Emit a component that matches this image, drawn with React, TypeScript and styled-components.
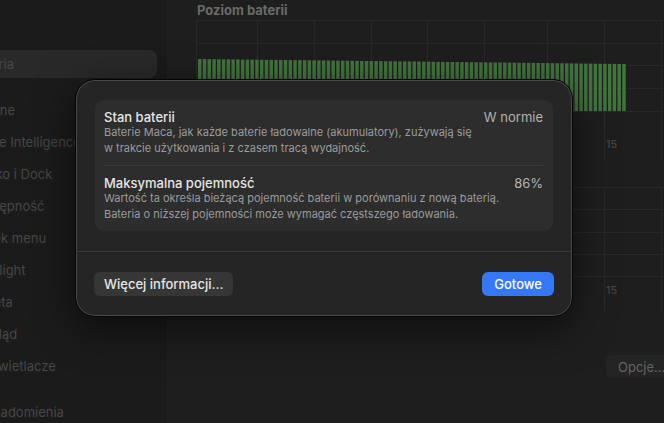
import React from "react";
import styled, { createGlobalStyle } from "styled-components";

const Global = createGlobalStyle`
  html, body { margin: 0; padding: 0; background: #1d1d1d; }
  body { width: 664px; height: 423px; overflow: hidden; font-family: "Inter", "Noto Sans", sans-serif; -webkit-font-smoothing: antialiased; }
  #root { width: 664px; height: 423px; }
`;

const Window = styled.div`
  position: relative;
  display: flex;
  width: 664px;
  height: 423px;
  overflow: hidden;
  background: #1e1e1e;
`;

const Sidebar = styled.nav`
  flex: 0 0 206px;
  margin-left: -40px;
  box-sizing: border-box;
  padding: 50px 8px 0 0;
  display: flex;
  flex-direction: column;
  gap: 18px;
  background: #1b1b1b;
  border-right: 1px solid #181818;
`;

const Group = styled.div`
  display: flex;
  flex-direction: column;
  gap: 4px;
`;

const Item = styled.div<{ $active?: boolean }>`
  height: 28px;
  display: flex;
  align-items: center;
  padding-left: 11px;
  border-radius: 8px;
  background: ${(p) => (p.$active ? "#292929" : "transparent")};
  color: #474747;
  font-size: 13px;
  white-space: nowrap;
`;

const Main = styled.main`
  flex: 1;
  min-width: 0;
  display: flex;
  flex-direction: column;
  padding-left: 30px;
`;

const SectionTitle = styled.h2`
  margin: 2px 0 0 1px;
  font-size: 13px;
  line-height: 16px;
  font-weight: 700;
  color: #6a6a6a;
`;

const Chart = styled.svg<{ $gap: number }>`
  display: block;
  margin-top: ${(p) => p.$gap}px;
  flex: none;
`;

const OptionsRow = styled.div`
  margin-top: 42px;
  padding-left: 410px;
  display: flex;
`;

const GhostButton = styled.div`
  height: 23px;
  padding: 0 12px;
  display: flex;
  align-items: center;
  border-radius: 6px;
  background: #242424;
  color: #636363;
  font-size: 13px;
  white-space: nowrap;
`;

const Sheet = styled.section`
  position: absolute;
  left: 75px;
  top: 79px;
  width: 498px;
  height: 238px;
  box-sizing: border-box;
  border: 1px solid #050505;
  border-radius: 20px;
  background: #252525;
  box-shadow: inset 0 0 0 1px #4a4a4a, 0 12px 40px rgba(0, 0, 0, 0.55);
  display: flex;
  flex-direction: column;
`;

const SheetBody = styled.div`
  padding: 20px 19px 20px;
`;

const Card = styled.div`
  background: #2d2d2d;
  border-radius: 9px;
  padding: 0 10px 0 9px;
`;

const Row = styled.div<{ $divider?: boolean }>`
  padding: 10px 0 9px;
  border-top: ${(p) => (p.$divider ? "1px solid #3a3a3a" : "none")};
`;

const RowHead = styled.div`
  display: flex;
  justify-content: space-between;
  align-items: baseline;
`;

const RowTitle = styled.div`
  font-size: 13px;
  line-height: 15px;
  color: #e6e6e6;
  font-weight: 500;
`;

const RowValue = styled.div`
  font-size: 13px;
  line-height: 15px;
  color: #b3b3b3;
`;

const RowDesc = styled.div`
  font-size: 11px;
  line-height: 15.5px;
  color: #9b9b9b;
`;

const Separator = styled.div`
  height: 1px;
  background: #3a3a3a;
  margin: 0 1px;
`;

const Footer = styled.div`
  padding: 20px 18px 18px 18px;
  display: flex;
  justify-content: space-between;
`;

const Button = styled.button<{ $primary?: boolean }>`
  height: 24px;
  padding: 0 ${(p) => (p.$primary ? 12 : 10)}px;
  border: none;
  border-radius: 6px;
  font-family: inherit;
  font-size: 13px;
  font-weight: 500;
  color: ${(p) => (p.$primary ? "#ffffff" : "#e6e6e6")};
  background: ${(p) => (p.$primary ? "#3478f6" : "#363636")};
`;

const VX = [0.5, 61.5, 118.5, 175.5, 231.5, 288.5, 351.5, 408.5, 465.5];

function Grid({ rows, height }: { rows: number[]; height: number }) {
  return (
    <g stroke="#292929" strokeWidth={1}>
      {rows.map((y) => (
        <line key={"h" + y} x1={0} x2={467} y1={y} y2={y} />
      ))}
      {VX.map((x) => (
        <line key={"v" + x} x1={x} x2={x} y1={0} y2={height} />
      ))}
    </g>
  );
}

const BAR_COUNT = 90;
const bars = Array.from({ length: BAR_COUNT }, (_, i) => {
  const pitch = 429 / BAR_COUNT;
  const top = 39 + (5 * i) / (BAR_COUNT - 1);
  return { x: 2 + i * pitch, top, w: pitch - 1.3 };
});

const sidebarGroups = [
  ["Bateria"],
  [
    "Ogólne",
    "Apple Intelligence i Siri",
    "Biurko i Dock",
    "Dostępność",
    "Pasek menu",
    "Spotlight",
    "Tapeta",
    "Wygląd",
    "Wyświetlacze",
  ],
  ["Powiadomienia"],
];

export default function App() {
  return (
    <>
      <Global />
      <Window>
        <Sidebar>
          {sidebarGroups.map((g, gi) => (
            <Group key={gi}>
              {g.map((label) => (
                <Item key={label} $active={label === "Bateria"}>
                  {label}
                </Item>
              ))}
            </Group>
          ))}
        </Sidebar>
        <Main>
          <SectionTitle>Poziom baterii</SectionTitle>
          <Chart $gap={2} width={467} height={140} viewBox="0 0 467 140">
            <Grid rows={[0.5, 23.5, 45.5, 68.5, 91.5]} height={140} />
            {bars.map((b, i) => (
              <rect key={i} x={b.x} y={b.top} width={b.w} height={91 - b.top} fill="#42743e" />
            ))}
            <text x={410} y={128} fontSize={11} fill="#4a4a4a" fontFamily="Inter, sans-serif">15</text>
          </Chart>
          <Chart $gap={27} width={467} height={126} viewBox="0 0 467 126">
            <Grid rows={[0.5, 22.5, 45.5, 67.5, 89.5]} height={126} />
            <text x={410} y={107} fontSize={11} fill="#4a4a4a" fontFamily="Inter, sans-serif">15</text>
          </Chart>
          <OptionsRow>
            <GhostButton>Opcje...</GhostButton>
          </OptionsRow>
        </Main>

        <Sheet>
          <SheetBody>
            <Card>
              <Row>
                <RowHead>
                  <RowTitle>Stan baterii</RowTitle>
                  <RowValue>W normie</RowValue>
                </RowHead>
                <RowDesc>
                  Baterie Maca, jak każde baterie ładowalne (akumulatory), zużywają się
                  <br />w trakcie użytkowania i z czasem tracą wydajność.
                </RowDesc>
              </Row>
              <Row $divider>
                <RowHead>
                  <RowTitle>Maksymalna pojemność</RowTitle>
                  <RowValue>86%</RowValue>
                </RowHead>
                <RowDesc>
                  Wartość ta określa bieżącą pojemność baterii w porównaniu z nową baterią.
                  <br />
                  Bateria o niższej pojemności może wymagać częstszego ładowania.
                </RowDesc>
              </Row>
            </Card>
          </SheetBody>
          <Separator />
          <Footer>
            <Button>Więcej informacji...</Button>
            <Button $primary>Gotowe</Button>
          </Footer>
        </Sheet>
      </Window>
    </>
  );
}
